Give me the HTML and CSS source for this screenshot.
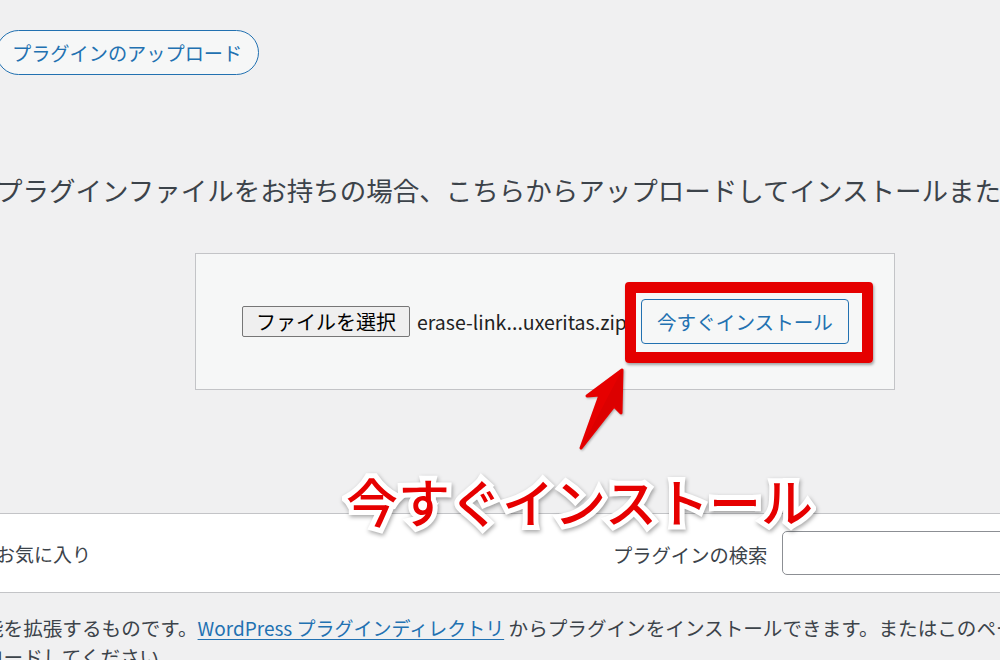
FILE: index.html
```html
<!DOCTYPE html>
<html lang="ja">
<head>
<meta charset="utf-8">
<title>プラグインを追加</title>
<link rel="stylesheet" href="styles.css">
</head>
<body>
<div class="page">
  <div class="head">
    <a class="upload-btn">プラグインのアップロード</a>
  </div>
  <p class="help">プラグインファイルをお持ちの場合、こちらからアップロードしてインストールまたは更新できます。</p>
  <div class="form-row">
    <div class="upload-form">
      <span class="file-btn">ファイルを選択</span>
      <span class="file-name">erase-link...uxeritas.zip</span>
      <span class="install-btn">今すぐインストール</span>
    </div>
  </div>
  <div class="filter-bar">
    <span class="tab">お気に入り</span>
    <div class="search">
      <span class="search-label">プラグインの検索</span>
      <span class="search-input"></span>
    </div>
  </div>
  <p class="intro">能を拡張するものです。<a class="link">WordPress プラグインディレクトリ</a> からプラグインをインストールできます。またはこのページの上部にあるボタンからアップ<br>ロードしてください。</p>
</div>

<div class="mark-box"></div>
<svg class="mark-arrow" width="70" height="95" viewBox="0 0 70 95">
  <polygon points="52,10 51,53 44,46 11,88 30,35 17,36" fill="#e60000" stroke="#e60000" stroke-width="3" stroke-linejoin="round"/>
  <polygon points="52,10 51,53 44,46 11,88" fill="#c80000" opacity="0.35"/>
</svg>
<div class="mark-text">今すぐインストール</div>
</body>
</html>
```
FILE: styles.css
```css
html, body {
  margin: 0;
  padding: 0;
}
body {
  width: 1000px;
  height: 660px;
  overflow: hidden;
  background: #f0f0f1;
  font-family: "Noto Sans CJK JP", "Noto Sans", sans-serif;
  color: #3c434a;
  position: relative;
}
.page {
  margin-left: -4px;
  width: 1300px;
}
.head {
  padding-top: 30px;
  display: flex;
}
.upload-btn {
  display: flex;
  align-items: center;
  box-sizing: border-box;
  height: 45px;
  width: 263px;
  padding-left: 15px;
  border: 1.5px solid #2271b1;
  border-radius: 23px;
  background: #f6f7f7;
  color: #2271b1;
  font-size: 19.2px;
  white-space: nowrap;
}
.help {
  margin: 95px 0 0;
  font-size: 26.5px;
  line-height: 40px;
  white-space: nowrap;
  color: #3c434a;
}
.form-row {
  margin-top: 43px;
  padding-left: 199px;
}
.upload-form {
  box-sizing: border-box;
  width: 700px;
  height: 137px;
  border: 1px solid #c3c4c7;
  background: #f6f7f7;
  display: flex;
  align-items: center;
  padding-left: 46px;
}
.file-btn {
  box-sizing: border-box;
  height: 31px;
  width: 168px;
  display: flex;
  align-items: center;
  justify-content: center;
  border: 1px solid #767676;
  border-radius: 2px;
  background: #efefef;
  color: #000;
  font-size: 20px;
}
.file-name {
  margin-left: 7px;
  font-size: 19.5px;
  color: #222;
  width: 224px;
  white-space: nowrap;
}
.install-btn {
  box-sizing: border-box;
  height: 45px;
  width: 208px;
  display: flex;
  align-items: center;
  justify-content: center;
  border: 1px solid #2271b1;
  border-radius: 4px;
  background: #f6f7f7;
  color: #2271b1;
  font-size: 19.6px;
}
.filter-bar {
  margin-top: 123px;
  box-sizing: border-box;
  height: 80px;
  background: #fff;
  border-top: 1px solid #c3c4c7;
  border-bottom: 1px solid #c3c4c7;
  display: flex;
  align-items: center;
  white-space: nowrap;
}
.tab {
  font-size: 19px;
  padding-left: 0;
  color: #3c434a;
}
.search {
  margin-left: 522px;
  display: flex;
  align-items: center;
}
.search-label {
  font-size: 19.3px;
  color: #3c434a;
  margin-top: 4px;
}
.search-input {
  margin-left: 15px;
  box-sizing: border-box;
  width: 260px;
  height: 44px;
  border: 1px solid #8c8f94;
  border-radius: 5px;
  background: #fff;
}
.intro {
  margin: 20px 0 0 -12px;
  font-size: 19.6px;
  line-height: 29px;
  white-space: nowrap;
  color: #3c434a;
}
.link {
  color: #2271b1;
  font-size: 19px;
  text-decoration: underline;
  text-underline-offset: 3px;
}
.mark-box {
  position: absolute;
  left: 625px;
  top: 282px;
  width: 248px;
  height: 81px;
  box-sizing: border-box;
  border: 11px solid #e50000;
  border-radius: 4px;
  box-shadow: 1px 2px 3px rgba(0, 0, 0, 0.35);
}
.mark-arrow {
  position: absolute;
  left: 570px;
  top: 360px;
  filter: drop-shadow(1px 1px 1px rgba(0, 0, 0, 0.3));
}
.mark-text {
  position: absolute;
  left: 346px;
  top: 466px;
  font-size: 52px;
  line-height: 70px;
  font-weight: 500;
  color: #e60000;
  white-space: nowrap;
  -webkit-text-stroke: 10px #fff;
  paint-order: stroke fill;
  filter: drop-shadow(1px 2px 2px rgba(0, 0, 0, 0.35));
}
```
